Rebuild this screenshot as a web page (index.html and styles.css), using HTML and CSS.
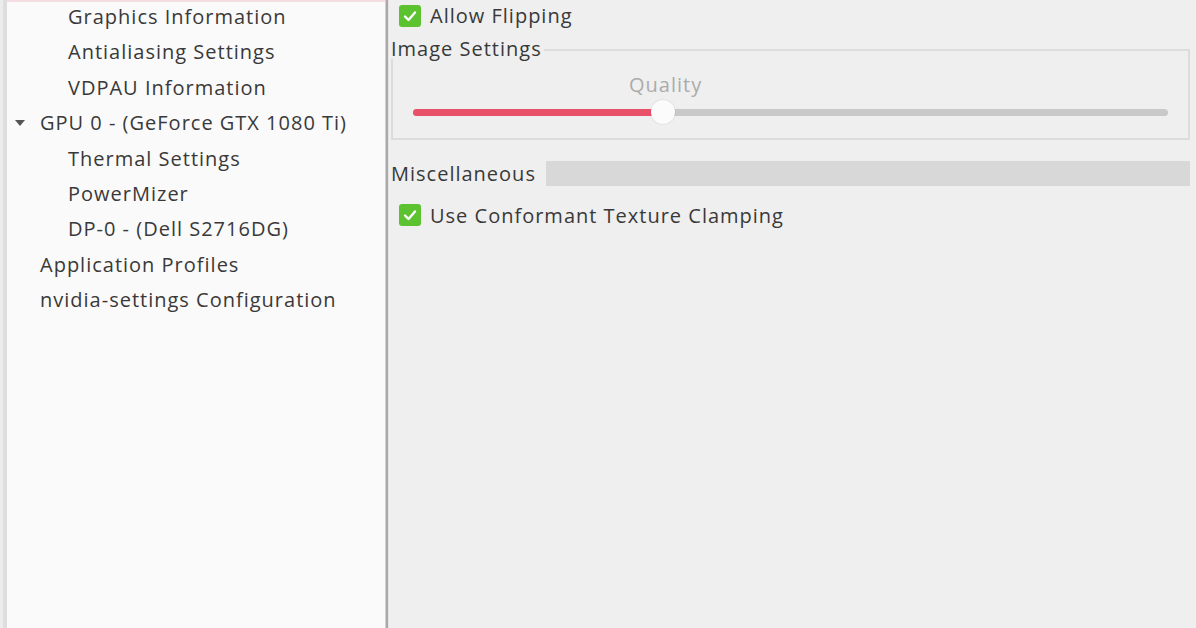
FILE: index.html
```html
<!DOCTYPE html>
<html>
<head>
<meta charset="utf-8">
<link rel="stylesheet" href="styles.css">
</head>
<body>
<div class="window">
  <div class="sidebar">
    <div class="sel-strip"></div>
    <ul class="tree">
      <li class="child">Graphics Information</li>
      <li class="child">Antialiasing Settings</li>
      <li class="child">VDPAU Information</li>
      <li class="parent"><span class="arrow"></span>GPU 0 - (GeForce GTX 1080 Ti)</li>
      <li class="child">Thermal Settings</li>
      <li class="child">PowerMizer</li>
      <li class="child">DP-0 - (Dell S2716DG)</li>
      <li class="parent">Application Profiles</li>
      <li class="parent">nvidia-settings Configuration</li>
    </ul>
  </div>
  <div class="divider"></div>
  <div class="content">
    <label class="check first">
      <span class="box"><svg viewBox="0 0 22 22" width="22" height="22"><path d="M6 11.5 L9.5 15 L16 7.5" fill="none" stroke="#fff" stroke-width="2.4" stroke-linecap="round" stroke-linejoin="round"/></svg></span>
      <span>Allow Flipping</span>
    </label>
    <div class="frame">
      <div class="frame-label">Image Settings</div>
      <div class="frame-body">
        <div class="quality">Quality</div>
        <div class="slider">
          <div class="fill"></div>
          <div class="knob"></div>
        </div>
      </div>
    </div>
    <div class="misc">
      <span class="misc-label">Miscellaneous</span>
      <span class="misc-bar"></span>
    </div>
    <label class="check second">
      <span class="box"><svg viewBox="0 0 22 22" width="22" height="22"><path d="M6 11.5 L9.5 15 L16 7.5" fill="none" stroke="#fff" stroke-width="2.4" stroke-linecap="round" stroke-linejoin="round"/></svg></span>
      <span>Use Conformant Texture Clamping</span>
    </label>
  </div>
</div>
</body>
</html>
```
FILE: styles.css
```css
html, body {
  margin: 0;
  padding: 0;
  width: 1196px;
  height: 628px;
  overflow: hidden;
}
body {
  font-family: "Open Sans", "Noto Sans", sans-serif;
  font-size: 20px;
  font-weight: 500;
  letter-spacing: 1px;
  color: #393939;
  background: #efefef;
}
.window {
  display: flex;
  height: 628px;
}
.sidebar {
  width: 382px;
  background: #fafafa;
  border-left: 3px solid #ececec;
  box-shadow: inset 4px 0 0 #dedede;
  flex: none;
}
.sel-strip {
  height: 2px;
  background: #f5dde1;
  margin-left: 4px;
}
.tree {
  list-style: none;
  margin: -3px 0 0 0;
  padding: 0;
}
.tree li {
  height: 35.4px;
  line-height: 35.4px;
  white-space: nowrap;
}
.tree .child {
  padding-left: 65px;
}
.tree .parent {
  padding-left: 37px;
  position: relative;
}
.arrow {
  position: absolute;
  left: 12px;
  top: 15px;
  width: 0;
  height: 0;
  border-left: 5px solid transparent;
  border-right: 5px solid transparent;
  border-top: 6px solid #555;
}
.divider {
  width: 2px;
  background: #a9a9a9;
  border-left: 1px solid #d0d0d0;
  border-right: 1px solid #e4e4e4;
  flex: none;
}
.content {
  flex: 1;
  padding: 0 6px 0 2px;
  display: flex;
  flex-direction: column;
}
.check {
  display: flex;
  align-items: center;
  gap: 9px;
  height: 32px;
  padding-left: 8px;
}
.check.first {
  height: 31px;
}
.box {
  width: 22px;
  height: 22px;
  border-radius: 3px;
  background: #5cc22f;
  display: block;
  flex: none;
}
.box svg { display: block; }
.frame {
  margin-top: 8px;
}
.frame-label {
  display: block;
  width: fit-content;
  line-height: 20px;
  height: 20px;
  position: relative;
  z-index: 1;
  background: #efefef;
  padding-right: 2px;
}
.frame-body {
  border: 2px solid #dcdcdc;
  margin-top: -10px;
  height: 87px;
}
.quality {
  color: #ababab;
  margin-top: 22px;
  line-height: 24px;
  padding-left: 236px;
}
.slider {
  margin: 12px 20px 0 20px;
  height: 7px;
  border-radius: 4px;
  background: #c9c9c9;
  position: relative;
}
.fill {
  width: 244px;
  height: 100%;
  background: #e9516a;
  border-radius: 4px 0 0 4px;
}
.knob {
  position: absolute;
  left: 238px;
  top: -9px;
  width: 24px;
  height: 24px;
  border-radius: 50%;
  background: #fbfbfb;
  box-shadow: 0 0 2px rgba(0,0,0,0.15);
}
.misc {
  display: flex;
  align-items: center;
  margin-top: 21px;
  height: 25px;
}
.misc-label {
  white-space: nowrap;
  padding-right: 10px;
}
.misc-bar {
  flex: 1;
  height: 25px;
  background: #d8d8d8;
}
.check.second {
  margin-top: 13px;
}
```
